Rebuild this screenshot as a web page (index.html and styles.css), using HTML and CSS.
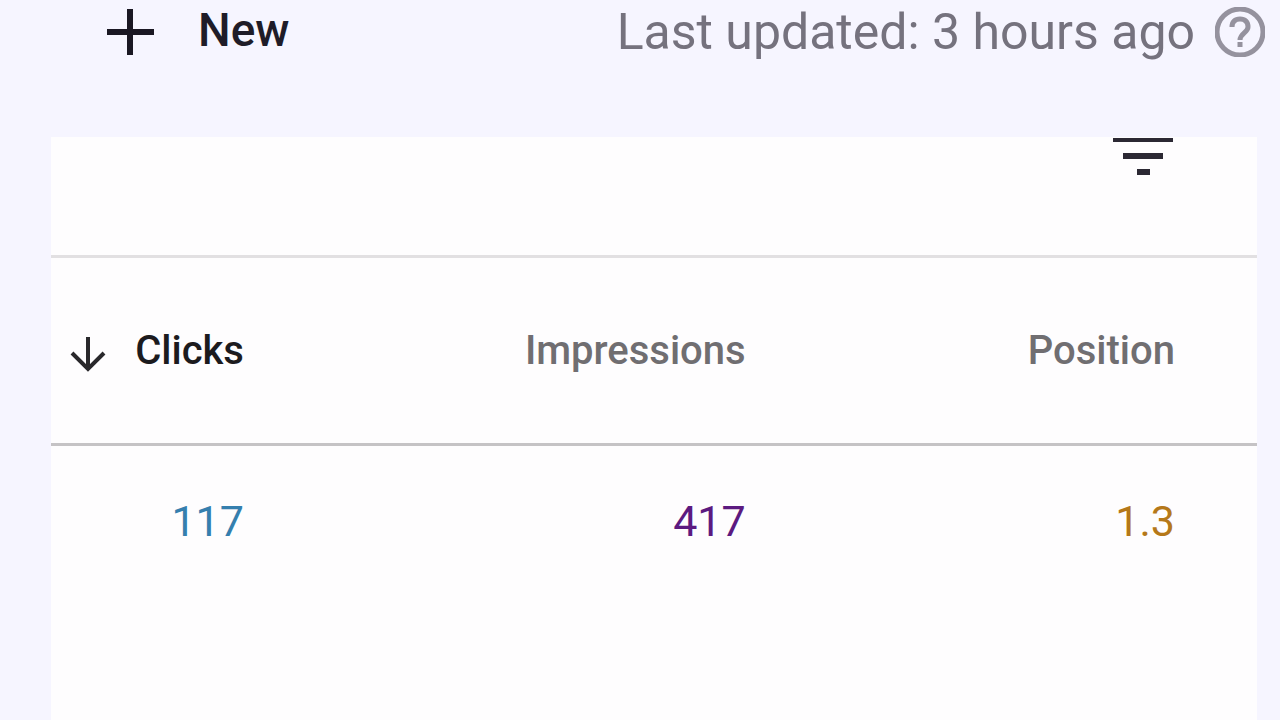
FILE: index.html
```html
<!DOCTYPE html>
<html lang="en">
    <head>
        <meta charset="utf-8">
        <meta name="viewport" content="width=device-width, initial-scale=1">
        <title>Performance</title>
        <link rel="stylesheet" href="styles.css">
    </head>
    <body>
        <div class="page">
            <header class="topbar">
                <button type="button" class="btn btn-new">
                    <svg class="icon-plus" viewBox="0 0 48 52" aria-hidden="true">
                        <path d="M23 5v46M0 28h47"/>
                    </svg>
                    New
                </button>
                <div class="updated">
                    <span>Last updated: 3 hours ago</span>
                    <button type="button" class="btn" aria-label="Help">
                        <svg class="icon-help" viewBox="0 0 50 50" aria-hidden="true">
                            <circle cx="25" cy="25" r="23"/>
                            <path d="M17 20c0-5 3-8 8-8s8 3 8 8c0 5.500-8 6.500-8 13"/>
                            <path d="M25 35v5"/>
                        </svg>
                    </button>
                </div>
            </header>

            <main class="card">
                <div class="card-tools">
                    <button type="button" class="btn" aria-label="Filter rows">
                        <svg class="icon-filter" viewBox="0 0 60 40" aria-hidden="true">
                            <path d="M0 1h60v4H0zM10 16h40v6H10zM24 32h13v6H24z"/>
                        </svg>
                    </button>
                </div>

                <table class="report">
                    <thead>
                        <tr>
                            <th scope="col" class="sorted" aria-sort="descending">
                                <button type="button" class="btn btn-sort">
                                    <svg class="icon-arrow" viewBox="0 0 36 42" aria-hidden="true">
                                        <path d="M18 7v32M2 23l16 16 16-16"/>
                                    </svg>
                                    Clicks
                                </button>
                            </th>
                            <th scope="col"><button type="button" class="btn btn-sort">Impressions</button></th>
                            <th scope="col"><button type="button" class="btn btn-sort">Position</button></th>
                        </tr>
                    </thead>
                    <tbody>
                        <tr>
                            <td class="clicks">117</td>
                            <td class="impressions">417</td>
                            <td class="position">1.3</td>
                        </tr>
                    </tbody>
                </table>
            </main>
        </div>
    </body>
</html>
```
FILE: styles.css
```css
* {
    padding: 0;
    margin: 0;
    box-sizing: border-box;
}

body {
    background: #f6f5ff;
    font-family: Roboto, "Liberation Sans", sans-serif;
}

.page {
    display: flex;
    flex-direction: column;
    min-height: 100vh;
}

.btn {
    display: inline-flex;
    align-items: center;
    border: 0;
    background: none;
    color: inherit;
    font: inherit;
    vertical-align: top;
    cursor: pointer;
}

svg {
    display: block;
    flex: none;
}

/* top bar */
.topbar {
    display: flex;
    justify-content: space-between;
    align-items: flex-start;
    padding: 0 15px 0 107px;
    margin-bottom: 73px;
}

.btn-new {
    gap: 43px;
    color: #1f1c28;
    font-size: 46px;
    font-weight: 500;
    line-height: 60px;
}

.icon-plus {
    width: 48px;
    height: 52px;
    fill: none;
    stroke: #1a1723;
    stroke-width: 6;
}

.updated {
    display: flex;
    align-items: center;
    gap: 20px;
    color: #75727e;
    font-size: 50px;
    line-height: 64px;
}

.icon-help {
    width: 50px;
    height: 50px;
    fill: none;
    stroke: #95929e;
    stroke-width: 5;
}

/* card */
.card {
    flex: 1;
    margin: 0 23px 0 51px;
    background: #fefdfe;
}

.card-tools {
    display: flex;
    justify-content: flex-end;
    align-items: flex-start;
    height: 121px;
    padding-right: 84px;
    border-bottom: 3px solid #e2e0e2;
}

.icon-filter {
    width: 60px;
    height: 40px;
    fill: #2b2833;
}

/* table */
.report {
    width: 100%;
    table-layout: fixed;
    border-collapse: separate;
    border-spacing: 0;
}

.report th,
.report td {
    padding-right: 82px;
    text-align: right;
    white-space: nowrap;
}

.report th {
    width: 41.6%;
    height: 188px;
    border-bottom: 3px solid #c5c3c5;
    color: #706e71;
    font-size: 40px;
    font-weight: 500;
    line-height: 48px;
}

.report th.sorted {
    width: 22.8%;
    color: #1c1b1e;
}

.report th:last-child {
    width: auto;
}

.btn-sort {
    gap: 29px;
}

.icon-arrow {
    width: 36px;
    height: 42px;
    fill: none;
    stroke: #29282b;
    stroke-width: 4;
}

.report td {
    height: 150px;
    font-size: 43px;
    line-height: 48px;
}

.clicks {
    color: #357fae;
}

.impressions {
    color: #5c1a80;
}

.position {
    color: #b57819;
}
```
